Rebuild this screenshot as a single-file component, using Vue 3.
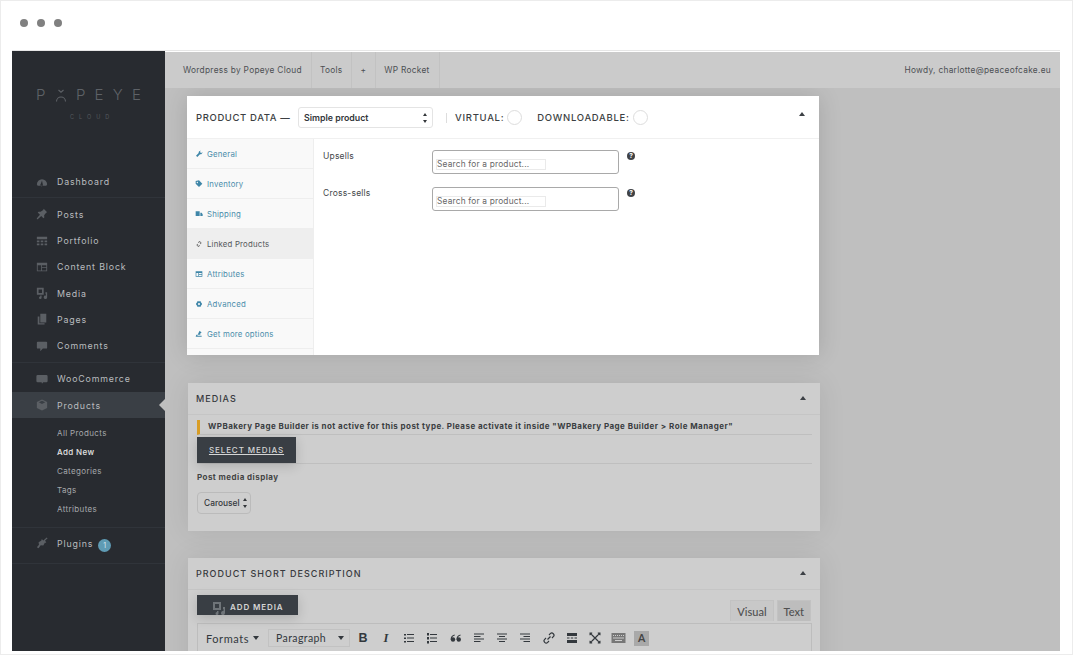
<script setup>
const menuA = [{ t: 'Dashboard', i: 'gauge' }];
const menuB = [
  { t: 'Posts', i: 'pin' },
  { t: 'Portfolio', i: 'grid' },
  { t: 'Content Block', i: 'block' },
  { t: 'Media', i: 'media' },
  { t: 'Pages', i: 'pages' },
  { t: 'Comments', i: 'comment' },
];
const subs = ['All Products', 'Add New', 'Categories', 'Tags', 'Attributes'];
const icons = {
  gauge: 'M1 11a6 6 0 1 1 12 0l-1 1.5H2zM7 6.5 5.5 10.5a1.5 1.5 0 1 0 2.4.4z',
  pin: 'M9 1l4 4-1.2.6-2.3 3 .2 2.4-1 1-2.6-2.6L2 13l-1 0 0-1 3.600-4.100L2 5.300l1-1 2.400.2 3-2.300z',
  grid: 'M1 2h12v3H1zM1 6.500h3v2H1zM5.500 6.500h3v2h-3zM10 6.500h3v2h-3zM1 10h3v2H1zM5.500 10h3v2h-3zM10 10h3v2h-3z',
  block: 'M1 2h12v10H1zM2 5v6h4V5zm5 0v2h5V5zm0 3v3h5V8z',
  media: 'M1 1h8v8H1zM3 3v4h4V3zM11 6h2v6a2 2 0 1 1-1.500-1.900V8H11zM5 10h1.500v2.500a1.500 1.500 0 1 1-1.500-1.500z',
  pages: 'M5 1h7v10H5zM2 4h2v8h6v1.500H2z',
  comment: 'M2 2h10a1 1 0 0 1 1 1v6a1 1 0 0 1-1 1H8l-3 3v-3H2a1 1 0 0 1-1-1V3a1 1 0 0 1 1-1z',
  woo: 'M2 2h11a1.500 1.500 0 0 1 1.500 1.500v6A1.500 1.500 0 0 1 13 11H9l-1.500 2L7 11H2A1.500 1.500 0 0 1 .5 9.500v-6A1.500 1.500 0 0 1 2 2z',
  cube: 'M7 .5l6 3v7l-6 3-6-3v-7zM7 2 3.200 3.900 7 5.800l3.800-1.900z',
  plug: 'M12.500.5l1 1-3 3 1.500 1.500-1 1-.5-.5-2 3.500-3-.5-2.500 3.500-2-1L3.500 9 3 6l3.500-2-.5-.5 1-1L8.500 4z',
};
const tabs = [
  { t: 'General', p: 'M1.500 8.500 5.500 4.500a3 3 0 0 1 3.500-3.500L7.300 2.800l1.900 1.900L11 3a3 3 0 0 1-3.500 3.500l-4 4z' },
  { t: 'Inventory', p: 'M6 .5l5 5-5 5-5-5V1.500zM3.500 2.500a1 1 0 1 0 .01 0z' },
  { t: 'Shipping', p: 'M1 2h6v7H1zM8 4h2l1.500 2.500V9H8z' },
  { t: 'Linked Products', p: 'M7 1.500 10 4.500 8 6.500 7 5.500 8.500 4.500 7 3 5.500 4.500 4.500 3.500zM4 5.500 5 6.500 3.500 7.500 5 9 6.500 7.500 7.500 8.500 5 10.500 2 7.500z', active: true },
  { t: 'Attributes', p: 'M1 2h10v8H1zM2 4.500V9h3V4.500zm4 0V6h4V4.500zM6 7v2h4V7z' },
  { t: 'Advanced', p: 'M6 1l1 1.300 1.700-.3.300 1.700L10.500 5 10 6l.5 1-1.500 1.300-.3 1.700-1.700-.3L6 11l-1-1.300-1.700.3L3 8.300 1.500 7 2 6l-.5-1L3 3.700 3.300 2 5 2.300zM6 4.500a1.500 1.500 0 1 0 .01 0z' },
  { t: 'Get more options', p: 'M7 1l3 3-2 1v2H2L1 10h9V8.500H3.500L5 5z' },
];
const fields = ['Upsells', 'Cross-sells'];
</script>

<template>
  <div class="window">
    <div class="dots"><i></i><i></i><i></i></div>
    <div class="frame">
      <aside class="side">
        <div class="logo">
          <div class="logo-word">
            <span>P</span>
            <svg width="12" height="13" viewBox="0 0 12 13" fill="none" stroke="#5e6267" stroke-width="1.100"><path d="M3.500 1 6 3.200 8.500 1M1.500 12.500a4.500 4.500 0 0 1 9 0"/></svg>
            <span>P</span><span>E</span><span>Y</span><span>E</span>
          </div>
          <div class="logo-sub">CLOUD</div>
        </div>

        <nav class="group first">
          <div v-for="m in menuA" :key="m.t" class="item">
            <svg class="ic" viewBox="0 0 14 14"><path :d="icons[m.i]" fill-rule="evenodd"/></svg>
            <span>{{ m.t }}</span>
          </div>
        </nav>
        <nav class="group mid">
          <div v-for="m in menuB" :key="m.t" class="item">
            <svg class="ic" viewBox="0 0 14 14"><path :d="icons[m.i]" fill-rule="evenodd"/></svg>
            <span>{{ m.t }}</span>
          </div>
        </nav>
        <nav class="group woo">
          <div class="item">
            <svg class="ic" viewBox="0 0 15 14"><path :d="icons.woo"/></svg>
            <span>WooCommerce</span>
          </div>
          <div class="item active">
            <svg class="ic" viewBox="0 0 14 14"><path :d="icons.cube" fill-rule="evenodd"/></svg>
            <span>Products</span>
            <b class="arrow"></b>
          </div>
          <div class="subs">
            <div v-for="s in subs" :key="s" class="sub" :class="{ on: s === 'Add New' }">{{ s }}</div>
          </div>
        </nav>
        <nav class="group plug">
          <div class="item">
            <svg class="ic" viewBox="0 0 14 14"><path :d="icons.plug"/></svg>
            <span>Plugins</span>
            <em class="badge">1</em>
          </div>
        </nav>
      </aside>

      <main class="main">
        <header class="bar">
          <div class="bar-i first-i">Wordpress by Popeye Cloud</div>
          <div class="bar-i">Tools</div>
          <div class="bar-i">+</div>
          <div class="bar-i">WP Rocket</div>
          <div class="howdy">Howdy, charlotte@peaceofcake.eu</div>
        </header>

        <div class="content">
          <section class="panel white">
            <div class="pd-head">
              <span class="pd-title">PRODUCT DATA —</span>
              <div class="select wide"><span>Simple product</span><span class="updown"></span></div>
              <span class="vr"></span>
              <span class="pd-opt">VIRTUAL:</span><span class="circle"></span>
              <span class="pd-opt second">DOWNLOADABLE:</span><span class="circle"></span>
              <span class="tri up"></span>
            </div>
            <div class="pd-body">
              <ul class="tabs">
                <li v-for="t in tabs" :key="t.t" :class="{ active: t.active }">
                  <svg width="8" height="8" viewBox="0 0 12 12"><path :d="t.p" fill-rule="evenodd"/></svg>
                  <span>{{ t.t }}</span>
                </li>
              </ul>
              <div class="fields">
                <div v-for="f in fields" :key="f" class="field">
                  <label>{{ f }}</label>
                  <div class="search"><span>Search for a product...</span></div>
                  <span class="help">?</span>
                </div>
              </div>
            </div>
          </section>

          <section class="panel grey medias">
            <div class="head"><span>MEDIAS</span><span class="tri"></span></div>
            <div class="notice">WPBakery Page Builder is not active for this post type. Please activate it inside "WPBakery Page Builder &gt; Role Manager"</div>
            <div class="btn-row"><div class="btn-dark sel">SELECT MEDIAS</div></div>
            <div class="lab">Post media display</div>
            <div class="select small"><span>Carousel</span><span class="updown"></span></div>
          </section>

          <section class="panel grey desc">
            <div class="head"><span>PRODUCT SHORT DESCRIPTION</span><span class="tri"></span></div>
            <div class="ed-top">
              <div class="btn-dark add">
                <svg class="add-ic" width="14" height="14" viewBox="0 0 14 14"><path :d="icons.media" fill="#6f7479" fill-rule="evenodd"/></svg>
                <span>ADD MEDIA</span>
              </div>
              <div class="ed-tabs"><span class="vt">Visual</span><span class="vt t2">Text</span></div>
            </div>
            <div class="toolbar">
              <span class="formats">Formats <i class="dn"></i></span>
              <span class="para">Paragraph <i class="dn"></i></span>
              <span class="tb b">B</span>
              <span class="tb it">I</span>
              <svg class="tbi" viewBox="0 0 12 12"><path d="M1 2h2v1.500H1zM4 2h7v1H4zM1 5.500h2V7H1zM4 5.500h7v1H4zM1 9h2v1.500H1zM4 9h7v1H4z"/></svg>
              <svg class="tbi" viewBox="0 0 12 12"><path d="M1 1h2v2.500H1zM4 2h7v1H4zM1 5h2v2.500H1zM4 5.500h7v1H4zM1 9h2v2.500H1zM4 9h7v1H4z"/></svg>
              <svg class="tbi" viewBox="0 0 12 12"><circle cx="3" cy="7.500" r="2.200"/><circle cx="8.800" cy="7.500" r="2.200"/><path class="line" d="M1.200 7.500C1.200 5 2.500 3.500 4.700 3M7 7.500C7 5 8.300 3.500 10.500 3"/></svg>
              <svg class="tbi" viewBox="0 0 12 12"><path d="M1 1.500h10v1H1zM1 4h6.500v1H1zM1 6.500h10v1H1zM1 9h6.500v1H1z"/></svg>
              <svg class="tbi" viewBox="0 0 12 12"><path d="M1 1.500h10v1H1zM3 4h6v1H3zM1 6.500h10v1H1zM3 9h6v1H3z"/></svg>
              <svg class="tbi" viewBox="0 0 12 12"><path d="M1 1.500h10v1H1zM4.500 4H11v1H4.500zM1 6.500h10v1H1zM4.500 9H11v1H4.500z"/></svg>
              <svg class="tbi" viewBox="0 0 12 12"><path class="line" d="M4.500 7.500 7.500 4.500M6 3l1.300-1.300a2.100 2.100 0 0 1 3 3L9 6M6 9l-1.300 1.300a2.100 2.100 0 0 1-3-3L3 6"/></svg>
              <svg class="tbi" viewBox="0 0 12 12"><path d="M1 1h10v3H1zM1 5.500h2.500v1H1zM4.800 5.500h2.400v1H4.800zM8.500 5.500H11v1H8.500zM1 8h10v3H1z"/></svg>
              <svg class="tbi" viewBox="0 0 12 12"><path class="line" d="M3 3l6 6M9 3l-6 6"/><path d="M.5.500h3l-.8.800.8.800-1.400 1.400-.8-.8-.8.800zM11.500.500v3l-.8-.8-.8.8-1.400-1.400.8-.8-.8-.8zM.5 11.500v-3l.8.800.8-.8 1.400 1.400-.8.800.8.800zM11.500 11.500h-3l.8-.8-.8-.8 1.400-1.400.8.800.8-.8z"/></svg>
              <svg class="tbi kb" viewBox="0 0 14 12"><path d="M0 1h14v10H0zM1.500 3v1h1V3zm2 0v1h1V3zm2 0v1h1V3zm2 0v1h1V3zm2 0v1h1V3zm2 0v1h1V3zM1.500 5.500v1h11v-1zM3.500 8v1h7V8z" fill-rule="evenodd"/></svg>
              <span class="tb a">A</span>
            </div>
          </section>
        </div>
      </main>
    </div>
  </div>
</template>

<style>
html, body { margin: 0; background: #fff; overflow: hidden; }
</style>

<style scoped>
.window {
  box-sizing: border-box;
  width: 1073px;
  height: 655px;
  border: 1px solid #ececec;
  background: #fff;
  padding: 0 12px 0 11px;
  font-family: Inter, "Liberation Sans", sans-serif;
  overflow: hidden;
}
.dots { display: flex; gap: 9px; padding: 18px 0 0 8px; height: 49px; box-sizing: border-box; }
.dots i { width: 8px; height: 8px; border-radius: 50%; background: #808080; }
.frame {
  display: flex;
  width: 1048px;
  height: 600px;
  border-top: 1px solid #e6e6e6;
}

/* sidebar */
.side { width: 153px; background: #282b30; flex: none; }
.logo { height: 112px; padding-top: 36px; box-sizing: border-box; color: #5e6267; }
.logo-word {
  display: flex; align-items: center; justify-content: space-between;
  width: 105px; margin-left: 24px; height: 16px;
  font-size: 15px; font-weight: 300; line-height: 16px;
}
.logo-sub { margin: 10px 0 0 58px; font-size: 5.500px; letter-spacing: 5px; line-height: 8px; color: #54585d; }
.group { border-bottom: 1px solid #30343a; }
.first { padding: 5px 0 3px; }
.mid { padding: 3px 0 3px; }
.woo { padding: 3px 0 8px; }
.plug { padding: 2px 0 6px; }
.item {
  position: relative;
  display: flex; align-items: center;
  height: 26.250px;
  padding-left: 24px;
  font-size: 8.800px; letter-spacing: .85px; font-weight: 400;
  color: #b9bcbf;
}
.ic { width: 12px; height: 12px; fill: #5b5f64; margin-right: 9px; flex: none; }
.active { background: #3a3f45; }
.arrow {
  position: absolute; right: 0; top: 7px;
  border: 6px solid transparent; border-right-color: #bfbfbf; border-left: 0;
}
.subs { padding: 6px 0 0 45px; }
.sub { height: 19px; line-height: 19px; font-size: 8px; letter-spacing: .36px; color: #a5a8ab; }
.sub.on { color: #e4e4e4; font-weight: 500; }
.badge {
  font-style: normal; width: 13px; height: 13px; border-radius: 50%;
  background: #5f9bb4; color: #dce9ee; font-size: 7px; line-height: 13px; text-align: center;
  margin: 5px 0 0 5px; letter-spacing: 0;
}

/* top bar */
.main { flex: 1; min-width: 0; display: flex; flex-direction: column; background: #bfbfbf; }
.bar {
  height: 36px; flex: none; display: flex; align-items: center; background: #cbcbcb;
  border-top: 1px solid #fff;
  font-size: 8.300px; letter-spacing: .3px; color: #4c4f53;
}
.bar-i { height: 100%; display: flex; align-items: center; padding: 0 9px 0 8px; border-right: 1px solid #c2c2c2; box-sizing: border-box; white-space: nowrap; }
.first-i { padding-left: 18px; }
.howdy { margin-left: auto; padding-right: 9px; }

/* panels */
.content {
  flex: 1; min-height: 0; overflow: hidden;
  padding: 8px 0 0 22px;
  background: #bfbfbf;
}
.panel { width: 632px; box-sizing: border-box; box-shadow: 0 0 26px rgba(0, 0, 0, .09); }
.white { background: #fff; height: 259px; display: flex; flex-direction: column; box-shadow: 0 0 22px rgba(0, 0, 0, .14); }
.grey { background: #cecece; margin-left: 1px; }
.medias { margin-top: 28px; height: 148px; }
.desc { margin-top: 27px; height: 130px; }

.pd-head {
  height: 43px; flex: none; box-sizing: border-box; display: flex; align-items: center;
  padding: 1px 14px 0 9px; border-bottom: 1px solid #f0f0f0;
}
.pd-title { font-size: 9.500px; letter-spacing: .62px; font-weight: 500; color: #3c3f43; width: 102px; white-space: nowrap; }
.select {
  display: flex; align-items: center; justify-content: space-between; box-sizing: border-box;
  border: 1px solid #e4e4e4; border-radius: 3px; background: #fff;
  font-weight: 600; color: #33363a;
}
.wide { width: 135px; height: 21px; padding: 0 5px; font-size: 8.800px; }
.updown { width: 4px; height: 8px; position: relative; flex: none; }
.updown::before, .updown::after {
  content: ""; position: absolute; left: 0; border: 2px solid transparent;
}
.updown::before { top: -1px; border-bottom: 3px solid #33363a; border-top: 0; }
.updown::after { bottom: -1px; border-top: 3px solid #33363a; border-bottom: 0; }
.vr { width: 1px; height: 10px; background: #ddd; margin: 0 8px 0 13px; }
.pd-opt { font-size: 9.500px; font-weight: 500; letter-spacing: .72px; color: #3c3f43; white-space: nowrap; }
.pd-opt.second { margin-left: 15px; }
.circle { width: 13px; height: 13px; border: 1px solid #ddd; border-radius: 50%; margin-left: 3px; flex: none; }
.tri {
  margin-left: auto; width: 0; height: 0; margin-bottom: 2px;
  border: 3.500px solid transparent; border-bottom: 4.500px solid #3c4045; border-top: 0;
}
.tri.up { margin-bottom: 8px; }
.pd-body { flex: 1; display: flex; min-height: 0; }
.tabs { list-style: none; margin: 0; padding: 0; width: 126px; flex: none; background: #f9f9f9; border-right: 1px solid #eee; }
.tabs li {
  height: 30px; box-sizing: border-box; display: flex; align-items: center; gap: 4px;
  padding-left: 8px; border-bottom: 1px solid #eeeeee;
  font-size: 7.800px; letter-spacing: .2px; color: #4b8dab;
}
.tabs svg { fill: #3f86a8; flex: none; }
.tabs li.active { background: #eeeeee; color: #55585c; }
.tabs li.active svg { fill: #666; }
.fields { padding: 11px 0 0 9px; flex: 1; }
.field { display: flex; height: 37px; align-items: flex-start; font-size: 8.500px; letter-spacing: .2px; color: #44474b; }
.field label { width: 109px; padding-top: 1px; line-height: 11px; }
.search {
  box-sizing: border-box; width: 187px; height: 24px; border: 1px solid #a9a9a9; border-radius: 3px;
  display: flex; align-items: center; padding: 4px 0 0 3px; background: #fff;
}
.search span {
  box-sizing: border-box; width: 110px; height: 11px; border: 1px solid #eaeaea; line-height: 9px;
  font-size: 8.300px; letter-spacing: .2px; color: #666;
  white-space: nowrap; overflow: hidden;
}
.help {
  width: 8px; height: 8px; border-radius: 50%; background: #3f4246; color: #fff;
  font-size: 6.500px; line-height: 8px; text-align: center; font-weight: 700; margin: 2px 0 0 8px; letter-spacing: 0;
}

.head {
  height: 32px; box-sizing: border-box; display: flex; align-items: center; padding: 0 14px 0 8px;
  border-bottom: 1px solid #c5c5c5;
  font-size: 9px; font-weight: 500; letter-spacing: 1px; color: #37393d;
}
.notice {
  margin: 5px 8px 0 9px; height: 15px; box-sizing: border-box; line-height: 13px; padding-left: 8px;
  border-left: 3px solid #d99e26; border-bottom: 1px solid #bfbfbf;
  font-size: 8px; font-weight: 700; letter-spacing: .45px; color: #3a3d41; white-space: nowrap;
}
.btn-row { margin: 2px 8px 0 9px; height: 26px; border-bottom: 1px solid #bfbfbf; }
.btn-dark {
  background: #393e44; color: #d5d5d5; box-shadow: 0 3px 12px rgba(0, 0, 0, .16);
  font-size: 8px; font-weight: 500; letter-spacing: .9px;
}
.sel { width: 99px; height: 26px; line-height: 26px; text-align: center; text-decoration: underline; }
.lab { margin: 8px 0 0 9px; font-size: 8px; font-weight: 700; letter-spacing: .45px; color: #444; line-height: 11px; }
.small { width: 54px; height: 22px; margin: 9px 0 0 9px; padding: 0 3px 0 6px; font-size: 8.400px; font-weight: 500; border-color: #bbb; background: #cecece; border-radius: 4px; }

.ed-top { display: flex; justify-content: space-between; margin: 5px 8px 0 9px; height: 28px; }
.add { width: 101px; height: 20px; display: flex; align-items: center; padding: 3px 0 0 15px; box-sizing: border-box; gap: 4px; font-weight: 600; }
.add-ic { position: relative; top: 1px; }
.ed-tabs { display: flex; gap: 3px; align-items: flex-end; height: 26px; margin-right: 1px; }
.vt {
  height: 21px; line-height: 21px; padding: 0 6px; font-family: Lato, sans-serif; font-size: 11px; font-weight: 500; color: #505050;
  background: #c8c8c8; border: 1px solid #c2c2c2; border-bottom: 0; box-sizing: border-box;
}
.vt.t2 { background: #bdbdbd; }
.toolbar {
  margin: 0 8px 0 9px; height: 30px; box-sizing: border-box; display: flex; align-items: center;
  border: 1px solid #bdbdbd; padding: 0 0 0 8px; color: #33383d;
}
.formats { font-family: Lato, sans-serif; font-size: 11px; letter-spacing: .55px; display: flex; align-items: center; gap: 4px; width: 62px; }
.para { display: flex; align-items: center; justify-content: space-between; font-family: Lato, sans-serif; font-size: 10.500px; width: 82px; height: 18px; padding: 0 5px 0 7px; box-sizing: border-box; border: 1px solid #c2c2c2; letter-spacing: .4px; margin-right: 6px; }
.dn { display: inline-block; border: 3px solid transparent; border-top: 4px solid #33383d; border-bottom: 0; }
.tb { text-align: center; flex: none; font-family: "Liberation Serif", serif; font-size: 12.500px; }
.b { font-family: "Liberation Sans", sans-serif; font-weight: 700; width: 14px; margin-right: 9px; }
.it { font-style: italic; font-weight: 700; width: 14px; margin-right: 10px; }
.tbi { width: 12px; height: 12px; fill: #33383d; flex: none; margin-right: 11.300px; }
.tbi .line { fill: none; stroke: #33383d; stroke-width: 1.200; }
.kb { width: 15px; margin-left: -1.500px; margin-right: 8px; fill: #777; }
.a { font-family: Lato, sans-serif; font-weight: 700; font-size: 10.500px; width: 15px; height: 15px; line-height: 15px; background: #a9a9a9; color: #444; }
</style>
